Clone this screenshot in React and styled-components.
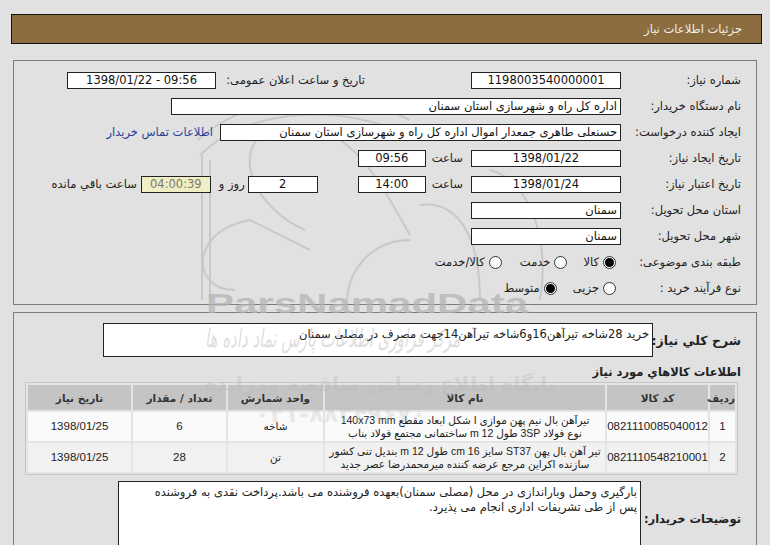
import React from "react";
import styled, { createGlobalStyle } from "styled-components";

const Global = createGlobalStyle`
  html, body { margin: 0; padding: 0; background: #e1e1e1; }
  body { font-family: "DejaVu Sans", Tahoma, sans-serif; font-size: 11px; color: #111; overflow: hidden; }
`;

const Page = styled.div`
  position: relative;
  direction: rtl;
  padding: 14px 8px 0 11px;
  width: 770px;
  height: 545px;
  box-sizing: border-box;
  overflow: hidden;
`;

const TitleBar = styled.div`
  height: 30px;
  box-sizing: border-box;
  background: #8b6d40;
  border: 1px solid #111;
  color: #f4efe6;
  font-size: 11.5px;
  display: flex;
  align-items: center;
  padding-right: 19px;
`;

const Panel = styled.div`
  margin: ${(p) => p.$top}px 5px 0 2px;
  border: 1px solid #7c7c7c;
  padding: ${(p) => p.$pt}px 15px ${(p) => p.$pb}px 0;
  min-height: ${(p) => p.$h || 0}px;
  box-sizing: border-box;
  position: relative;
  z-index: 1;
`;

const Row = styled.div`
  display: flex;
  align-items: center;
  height: 26px;
`;

const Label = styled.div`
  width: ${(p) => p.$w || 120}px;
  flex: none;
  white-space: nowrap;
  font-size: 11.5px;
  color: #222;
`;

const Field = styled.div`
  width: ${(p) => p.$w}px;
  height: 17px;
  box-sizing: border-box;
  flex: none;
  background: ${(p) => (p.$warn ? "#f0eec4" : "#fff")};
  color: ${(p) => (p.$warn ? "#7b7b6a" : "#111")};
  border: 1px solid #222;
  display: flex;
  align-items: center;
  justify-content: ${(p) => (p.$center ? "center" : "flex-start")};
  padding: 0 3px;
  margin-left: ${(p) => p.$ml || 0}px;
  font-size: 11.5px;
  white-space: nowrap;
  overflow: hidden;
`;

const Ltr = styled.span`
  direction: ltr;
  unicode-bidi: isolate;
`;

const Text = styled.span`
  flex: none;
  white-space: nowrap;
  margin-left: ${(p) => p.$ml || 0}px;
  color: ${(p) => (p.$link ? "#2a3d9a" : "#222")};
  font-size: 11.5px;
`;

const Spacer = styled.div`
  width: ${(p) => p.$w}px;
  flex: none;
`;

const RadioGroup = styled.div`
  display: flex;
  align-items: center;
  padding-right: 5px;
`;

const RadioItem = styled.label`
  display: flex;
  align-items: center;
  gap: 4px;
  margin-left: ${(p) => p.$ml}px;
  font-size: 11.5px;
  color: #222;
`;

const Dot = styled.span`
  width: 13px;
  height: 13px;
  box-sizing: border-box;
  border-radius: 50%;
  border: 1px solid #333;
  background: #fff;
  position: relative;
  flex: none;
  &::after {
    content: "";
    display: ${(p) => (p.$on ? "block" : "none")};
    position: absolute;
    inset: 1px;
    border-radius: 50%;
    background: #000;
  }
`;

const BoldLabel = styled.div`
  width: ${(p) => p.$w}px;
  flex: none;
  font-weight: bold;
  font-size: ${(p) => p.$size || 13}px;
  color: #222;
  white-space: nowrap;
`;

const BoxRow = styled.div`
  display: flex;
  align-items: center;
  margin-top: ${(p) => p.$mt || 0}px;
`;

const Box = styled.div`
  width: ${(p) => p.$w}px;
  height: ${(p) => p.$h}px;
  box-sizing: border-box;
  background: #fff;
  border: 1px solid #222;
  padding: 3px 3px;
  font-size: 11.5px;
  line-height: 15px;
  color: #222;
`;

const Heading = styled.div`
  margin-top: 5px;
  height: 20px;
  display: flex;
  align-items: center;
  font-weight: bold;
  font-size: 11.5px;
  color: #222;
`;

const Table = styled.table`
  width: 711px;
  table-layout: fixed;
  margin-right: 3px;
  border: 1px solid #c6c6c6;
  border-spacing: 2px;
  background: #e4e4e4;
  direction: rtl;
`;

const Th = styled.th`
  background: #c4c4c4;
  height: 25px;
  font-size: 10.5px;
  font-weight: bold;
  color: #333;
  text-align: center;
  padding: 0;
`;

const Td = styled.td`
  background: ${(p) => (p.$alt ? "#f1f1f1" : "#fafafa")};
  height: ${(p) => p.$h || 29}px;
  font-family: "Liberation Sans", "DejaVu Sans", sans-serif;
  font-size: ${(p) => p.$size || 10.5}px;
  line-height: 13px;
  color: #222;
  text-align: center;
  padding: 0;
  white-space: nowrap;
  overflow: hidden;
`;

const Watermark = styled.div`
  position: absolute;
  left: ${(p) => p.$x}px;
  top: ${(p) => p.$y}px;
  font-family: ${(p) => p.$font || '"DejaVu Sans", sans-serif'};
  font-weight: ${(p) => p.$weight || "bold"};
  font-style: ${(p) => p.$style || "normal"};
  font-size: ${(p) => p.$size}px;
  line-height: 1;
  color: ${(p) => p.$color || "#c4c4c4"};
  opacity: ${(p) => p.$op || 1};
  transform: ${(p) => p.$tf || "none"};
  transform-origin: left top;
  pointer-events: none;
  z-index: 2;
  white-space: nowrap;
  direction: ltr;
`;

const Logo = styled.svg`
  position: absolute;
  left: 190px;
  top: 100px;
  pointer-events: none;
  z-index: 0;
`;

export default function App() {
  return (
    <>
      <Global />
      <Page>
        <TitleBar>جزئیات اطلاعات نیاز</TitleBar>
        <Logo width="400" height="200" viewBox="0 0 400 200">
          <g fill="none" stroke="#c9c9c9" strokeWidth="2">
            <path d="M8 40 C 60 -10, 160 -10, 220 20" />
            <path d="M10 55 C 60 5, 160 5, 215 35" />
            <path d="M12 55 L 12 200" />
            <path d="M20 60 L 20 200" />
            <path d="M45 190 C 0 190, 0 130, 60 120 L 120 150" />
            <path d="M75 30 C 40 60, 70 110, 115 130" />
            <path d="M150 40 C 180 60, 200 100, 220 135" />
            <path d="M220 140 C 170 140, 150 190, 160 210" />
            <path d="M230 105 C 270 100, 290 140, 290 200" />
            <path d="M300 70 C 340 80, 360 140, 350 200" />
          </g>
        </Logo>
        <Panel $top={16} $pt={6} $pb={3}>
          <Row>
            <Label>شماره نیاز:</Label>
            <Field $w={150} $center>1198003540000001</Field>
            <Spacer $w={106} />
            <Label $w={149}>تاریخ و ساعت اعلان عمومی:</Label>
            <Field $w={149} $center><Ltr>1398/01/22 - 09:56</Ltr></Field>
          </Row>
          <Row>
            <Label>نام دستگاه خریدار:</Label>
            <Field $w={450}>اداره کل راه و شهرسازی استان سمنان</Field>
          </Row>
          <Row>
            <Label>ایجاد کننده درخواست:</Label>
            <Field $w={401} $ml={7}>حسنعلی طاهری جمعدار اموال اداره کل راه و شهرسازی استان سمنان</Field>
            <Text $link>اطلاعات تماس خریدار</Text>
          </Row>
          <Row>
            <Label>تاریخ ایجاد نیاز:</Label>
            <Field $w={150} $center $ml={8}>1398/01/22</Field>
            <Text $ml={6}>ساعت</Text>
            <Field $w={68} $center>09:56</Field>
          </Row>
          <Row>
            <Label>تاریخ اعتبار نیاز:</Label>
            <Field $w={150} $center $ml={8}>1398/01/24</Field>
            <Text $ml={6}>ساعت</Text>
            <Field $w={68} $center $ml={40}>14:00</Field>
            <Field $w={70} $center $ml={3}>2</Field>
            <Text $ml={8}>روز و</Text>
            <Field $w={70} $center $warn $ml={4}>04:00:39</Field>
            <Text>ساعت باقي مانده</Text>
          </Row>
          <Row>
            <Label>استان محل تحویل:</Label>
            <Field $w={150}>سمنان</Field>
          </Row>
          <Row>
            <Label>شهر محل تحویل:</Label>
            <Field $w={150}>سمنان</Field>
          </Row>
          <Row>
            <Label>طبقه بندی موضوعی:</Label>
            <RadioGroup>
              <RadioItem $ml={16}><Dot $on />کالا</RadioItem>
              <RadioItem $ml={18}><Dot />خدمت</RadioItem>
              <RadioItem $ml={0}><Dot />کالا/خدمت</RadioItem>
            </RadioGroup>
          </Row>
          <Row>
            <Label>نوع فرآیند خرید :</Label>
            <RadioGroup>
              <RadioItem $ml={16}><Dot />جزیی</RadioItem>
              <RadioItem $ml={0}><Dot $on />متوسط</RadioItem>
            </RadioGroup>
          </Row>
        </Panel>
        <Panel $top={7} $pt={10} $pb={0} $h={240}>
          <BoxRow>
            <BoldLabel $w={88} $size={12.5}>شرح کلي نیاز:</BoldLabel>
            <Box $w={550} $h={34}>خرید 28شاخه تیرآهن16و6شاخه تیرآهن14جهت مصرف در مصلی سمنان</Box>
          </BoxRow>
          <Heading>اطلاعات کالاهاي مورد نیاز</Heading>
          <Table>
            <colgroup>
              <col style={{ width: 25 }} />
              <col style={{ width: 101 }} />
              <col style={{ width: 280 }} />
              <col style={{ width: 95 }} />
              <col style={{ width: 93 }} />
              <col style={{ width: 103 }} />
            </colgroup>
            <thead>
              <tr>
                <Th>ردیف</Th>
                <Th>کد کالا</Th>
                <Th>نام کالا</Th>
                <Th>واحد شمارش</Th>
                <Th>تعداد / مقدار</Th>
                <Th>تاریخ نیاز</Th>
              </tr>
            </thead>
            <tbody>
              <tr>
                <Td $size={11.5}>1</Td>
                <Td $size={11.5}>0821110085040012</Td>
                <Td>تیرآهن بال نیم پهن موازی I شکل ابعاد مقطع 140x73 mm<br />نوع فولاد 3SP طول 12 m ساختمانی مجتمع فولاد بناب</Td>
                <Td>شاخه</Td>
                <Td $size={11.5}>6</Td>
                <Td $size={11.5}>1398/01/25</Td>
              </tr>
              <tr>
                <Td $alt $h={28} $size={11.5}>2</Td>
                <Td $alt $size={11.5}>0821110548210001</Td>
                <Td $alt>تیر آهن بال پهن ST37 سایز 16 cm طول 12 m بندیل تنی کشور<br />سازنده اکراین مرجع عرضه کننده میرمحمدرضا عصر جدید</Td>
                <Td $alt>تن</Td>
                <Td $alt $size={11.5}>28</Td>
                <Td $alt $size={11.5}>1398/01/25</Td>
              </tr>
            </tbody>
          </Table>
          <BoxRow $mt={6}>
            <BoldLabel $w={100} $size={11.5}>توضیحات خریدار:</BoldLabel>
            <Box $w={523} $h={75}>بارگیری وحمل وباراندازی در محل (مصلی سمنان)بعهده فروشنده می باشد.پرداخت نقدی به فروشنده<br />پس از طی تشریفات اداری انجام می پذیرد.</Box>
          </BoxRow>
        </Panel>
        <Watermark $x={206} $y={290} $size={28} $color="#b4b4b4" $op={0.75} $font='"Liberation Sans", sans-serif' $tf="scaleX(1.5)">ParsNamadData</Watermark>
        <Watermark $x={205} $y={327} $size={15} $weight="normal" $style="italic" $color="#b8b8b8" $op={0.45} $tf="scaleY(1.7)">مرکز فراوری اطلاعات پارس نماد داده ها</Watermark>
        <Watermark $x={205} $y={374} $size={20} $color="#bcbcbc" $op={0.4}>پایگاه اطلاع رسانی مناقصه ومزایده</Watermark>
        <Watermark $x={255} $y={402} $size={24} $color="#c2c2c2" $op={0.3}>۰۲۱-۸۸۳۴۹۶۷۰</Watermark>
      </Page>
    </>
  );
}
